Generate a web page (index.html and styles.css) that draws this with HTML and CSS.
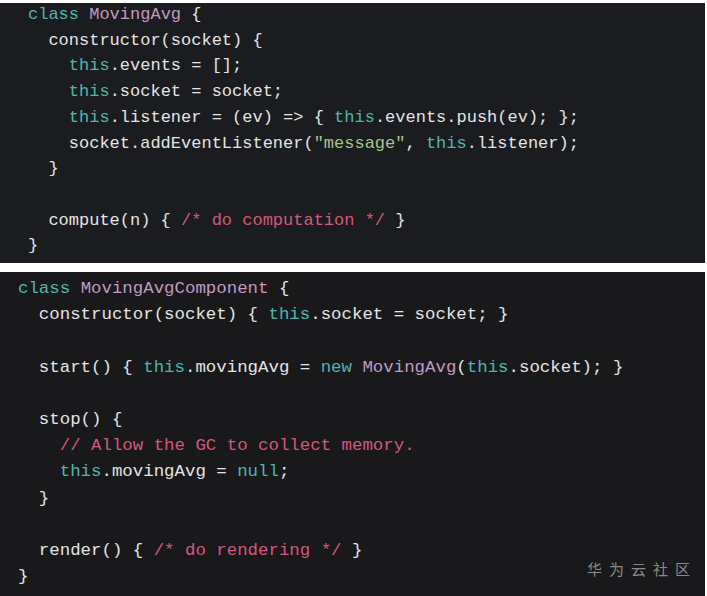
FILE: index.html
```html
<!DOCTYPE html>
<html lang="en">
<head>
<meta charset="utf-8">
<title>MovingAvg</title>
<link rel="stylesheet" href="styles.css">
</head>
<body>
<div class="panel panel-a">
<pre class="code"><span class="kw">class</span> <span class="cls">MovingAvg</span> {
  constructor(socket) {
    <span class="kw">this</span>.events = [];
    <span class="kw">this</span>.socket = socket;
    <span class="kw">this</span>.listener = (ev) =&gt; { <span class="kw">this</span>.events.push(ev); };
    socket.addEventListener(<span class="str">"message"</span>, <span class="kw">this</span>.listener);
  }

  compute(n) { <span class="cm">/* do computation */</span> }
}</pre>
</div>
<div class="panel panel-b">
<pre class="code"><span class="kw">class</span> <span class="cls">MovingAvgComponent</span> {
  constructor(socket) { <span class="kw">this</span>.socket = socket; }

  start() { <span class="kw">this</span>.movingAvg = <span class="kw">new</span> <span class="cls">MovingAvg</span>(<span class="kw">this</span>.socket); }

  stop() {
    <span class="cm">// Allow the GC to collect memory.</span>
    <span class="kw">this</span>.movingAvg = <span class="kw">null</span>;
  }

  render() { <span class="cm">/* do rendering */</span> }
}</pre>
<div class="watermark">华为云社区</div>
</div>
</body>
</html>
```
FILE: styles.css
```css
html, body {
  margin: 0;
  padding: 0;
  background: #ffffff;
}
body {
  width: 707px;
  height: 596px;
  overflow: hidden;
}
.panel {
  background: #1b1c1f;
  width: 705px;
  box-sizing: border-box;
  overflow: hidden;
}
.panel-a {
  margin-top: 3px;
  height: 260px;
  padding-left: 28px;
}
.panel-b {
  position: relative;
  margin-top: 9px;
  height: 324px;
  padding-left: 18px;
  padding-top: 4px;
  background: #19191c;
}
.code {
  margin: 0;
  font-family: "Liberation Mono", "DejaVu Sans Mono", monospace;
  color: #e4e4e4;
  white-space: pre;
}
.panel-a .code {
  font-size: 17px;
  line-height: 25.7px;
  margin-top: -1px;
}
.panel-b .code {
  font-size: 17.4px;
  line-height: 26.2px;
}
.kw { color: #4db6ac; }
.cls { color: #c39ac3; }
.str { color: #a8c48a; }
.cm { color: #d4587a; }
.watermark {
  position: absolute;
  right: 8px;
  top: 289px;
  font-family: "Noto Sans CJK SC", sans-serif;
  font-size: 15px;
  line-height: 1;
  letter-spacing: 7px;
  color: #8a8a8a;
}
```
